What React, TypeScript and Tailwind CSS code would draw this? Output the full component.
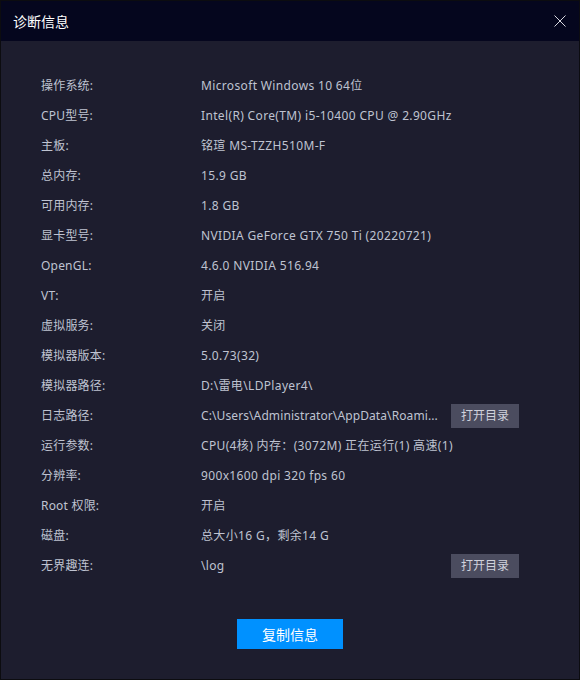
import React from "react";

type Row = { label: string; value: string; button?: boolean; tight?: boolean };

const rows: Row[] = [
  { label: "操作系统:", value: "Microsoft Windows 10 64位" },
  { label: "CPU型号:", value: "Intel(R) Core(TM) i5-10400 CPU @ 2.90GHz" },
  { label: "主板:", value: "铭瑄 MS-TZZH510M-F" },
  { label: "总内存:", value: "15.9 GB" },
  { label: "可用内存:", value: "1.8 GB" },
  { label: "显卡型号:", value: "NVIDIA GeForce GTX 750 Ti (20220721)" },
  { label: "OpenGL:", value: "4.6.0 NVIDIA 516.94" },
  { label: "VT:", value: "开启" },
  { label: "虚拟服务:", value: "关闭" },
  { label: "模拟器版本:", value: "5.0.73(32)" },
  { label: "模拟器路径:", value: "D:\\雷电\\LDPlayer4\\" },
  { label: "日志路径:", value: "C:\\Users\\Administrator\\AppData\\Roami...", button: true, tight: true },
  { label: "运行参数:", value: "CPU(4核) 内存：(3072M) 正在运行(1) 高速(1)" },
  { label: "分辨率:", value: "900x1600 dpi 320 fps 60" },
  { label: "Root 权限:", value: "开启" },
  { label: "磁盘:", value: "总大小16 G，剩余14 G" },
  { label: "无界趣连:", value: "\\log", button: true },
];

export default function App() {
  return (
    <div
      className="w-[580px] h-[680px] bg-[#1d1d2e] border border-[#0c0c10] flex flex-col text-[#bfc3d1]"
      style={{ fontFamily: '"Noto Sans", "Noto Sans CJK SC", sans-serif' }}
    >
      <div className="h-[40px] bg-[#05061e] flex items-center justify-between pl-[12px] pr-[13px] shrink-0">
        <span className="text-[14px] text-white">诊断信息</span>
        <svg width="12" height="12" viewBox="0 0 12 12" className="text-[#d8d8e0]">
          <path d="M0.5 0.5 L11.5 11.5 M11.5 0.5 L0.5 11.5" stroke="currentColor" strokeWidth="1" />
        </svg>
      </div>
      <div className="flex flex-col pt-[30px] pl-[40px] pr-[60px]">
        {rows.map((r) => (
          <div key={r.label} className="h-[30px] flex items-center text-[12px]">
            <div className="w-[160px] shrink-0 tracking-[0.2px]">{r.label}</div>
            <div
              className={
                r.tight
                  ? "flex-1 min-w-0 whitespace-nowrap tracking-[0.1px]"
                  : "flex-1 min-w-0 whitespace-nowrap tracking-[0.35px]"
              }
            >
              {r.value}
            </div>
            {r.button && (
              <div className="ml-[4px] w-[68px] h-[24px] shrink-0 bg-[#4b4c5f] text-[#d0d2dc] flex items-center justify-center text-[12px]">
                打开目录
              </div>
            )}
          </div>
        ))}
      </div>
      <div className="flex justify-center mt-[38px]">
        <div className="w-[106px] h-[30px] bg-[#0091ff] text-white text-[14px] flex items-center justify-center">
          复制信息
        </div>
      </div>
    </div>
  );
}
